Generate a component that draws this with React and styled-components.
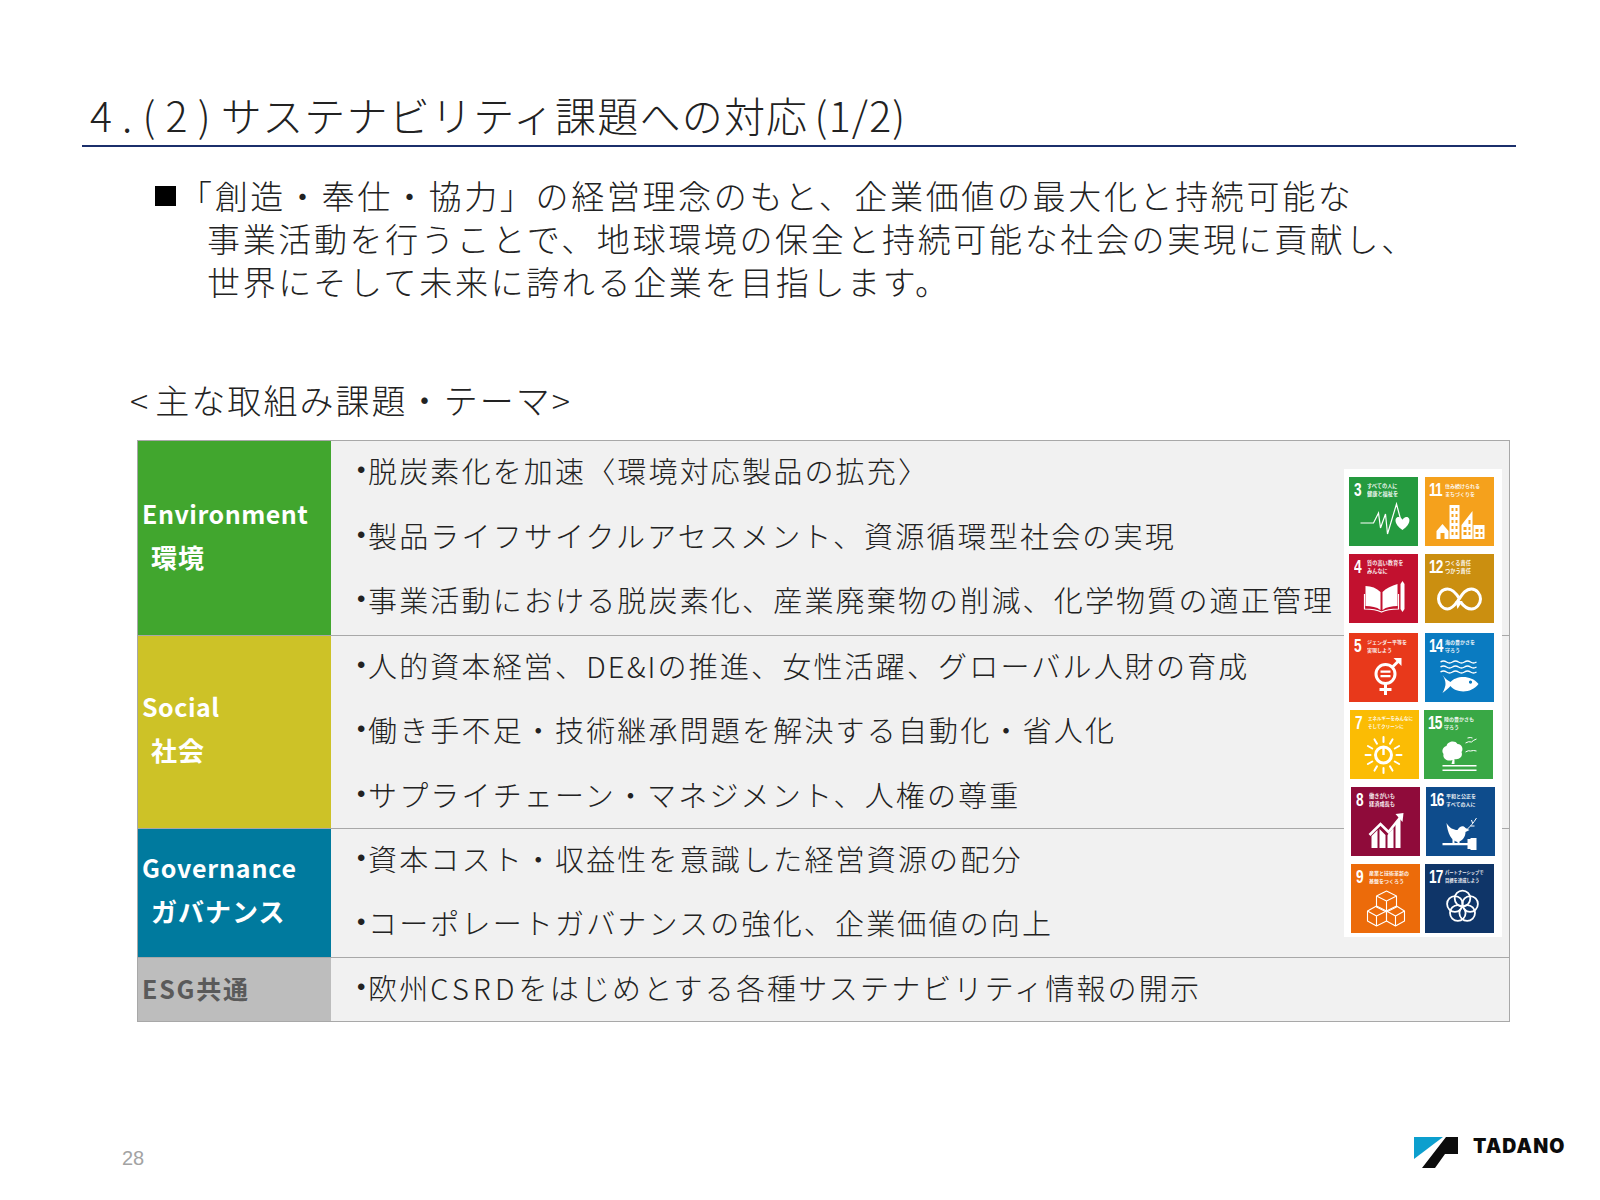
import React from "react";
import styled, { createGlobalStyle } from "styled-components";

const Global = createGlobalStyle`
  html, body { margin: 0; padding: 0; background: #fff; }
  body { font-family: "Noto Sans CJK JP", "Noto Sans", sans-serif; color: #222; }
`;
const Page = styled.div`
  position: relative; width: 1600px; height: 1200px; overflow: hidden; background: #fff;
  padding: 88px 84px 0 82px; box-sizing: border-box;
`;
const Title = styled.h1`
  margin: 0; height: 59px; padding-left: 8px; border-bottom: 2px solid #1b2f6b; box-sizing: border-box;
  font-size: 41px; font-weight: 300; line-height: 52px; letter-spacing: 1.2px; color: #222; white-space: pre;
`;
const TitleNo = styled.span`
  letter-spacing: .55px;
`;
const TitlePage = styled.span`
  margin-left: -4px;
`;
const Lead = styled.div`
  margin: 27px 0 0 73px; font-size: 33px; line-height: 43px; letter-spacing: 2.65px; font-weight: 300; white-space: nowrap;
`;
const LeadLine = styled.div`
  padding-left: ${p => (p.$first ? 0 : 52)}px; display: flex; align-items: center;
`;
const Square = styled.span`
  width: 21px; height: 20px; background: #000; margin-right: 3px; flex: none;
`;
const SubHead = styled.h2`
  margin: 73px 0 0 48px; font-size: 34px; line-height: 48px; font-weight: 300; letter-spacing: 2.05px;
`;
const SubHeadMark = styled.span`
  margin-right: 5px;
`;
const TableWrap = styled.div`
  position: relative; margin: 16px 0 0 55px; width: 1373px;
`;
const Table = styled.div`
  border: 1px solid #a8a8a8; background: #f1f1f1;
`;
const Row = styled.div`
  display: grid; grid-template-columns: 193px 1fr; height: ${p => p.$h}px; box-sizing: border-box;
  & + & { border-top: 1px solid #a8a8a8; }
`;
const Label = styled.div`
  background: ${p => p.$bg}; color: ${p => p.$fg || "#fff"}; display: flex; flex-direction: column; justify-content: center;
  padding: 0 0 ${p => p.$lift}px 4px; font-size: 25px; letter-spacing: ${p => p.$ls}px; font-weight: 700; line-height: 44px; white-space: nowrap;
`;
const LabelSub = styled.span`
  padding-left: 9px; font-size: 26px; letter-spacing: 1px;
`;
const Items = styled.ul`
  margin: -3px 0 0; padding: 0 0 0 26px; list-style: none; font-size: 29px; font-weight: 300; letter-spacing: 2.17px; line-height: 64.5px; color: #222; white-space: nowrap;
`;
const Item = styled.li`
  display: flex;
  &::before { content: "•"; width: 11px; flex: none; letter-spacing: 0; font-family: "Liberation Sans", sans-serif; font-size: 24px; }
`;
const WideLatin = styled.span`
  letter-spacing: 4.2px;
`;
const SdgPanel = styled.div`
  position: absolute; left: 1207px; top: 29px; width: 158px; height: 468px; background: #fff;
  display: grid; grid-template-columns: 76px 76px; grid-template-rows: 77px 79px 77px 77px 77px 68px;
  padding: 8px 0 0 5px; box-sizing: border-box;
`;
const Tile = styled.div`
  width: 69px; height: 68.5px; margin-left: ${p => p.$dx || 0}px; background: ${p => p.$bg}; color: #fff; display: flex; flex-direction: column; overflow: hidden;
`;
const TileHead = styled.div`
  height: 22px; display: flex; align-items: flex-start; gap: 2px; padding: 4px 0 0 ${p => (p.$wide ? 4 : 5)}px; box-sizing: border-box;
`;
const TileNum = styled.span`
  font-family: "Liberation Sans", sans-serif; font-weight: 700; font-size: 18.5px; line-height: 17px; letter-spacing: -1px;
  display: inline-block; transform: scaleX(.74); transform-origin: left top; width: ${p => (p.$wide ? 14 : 11)}px; flex: none;
`;
const TileCaption = styled.span`
  font-size: ${p => p.$size}px; line-height: 7.6px; font-weight: 700; white-space: pre; margin-top: 1px; opacity: .92;
`;
const TileIcon = styled.svg`
  display: block; width: 69px; height: 46px; flex: none;
`;
const PageNo = styled.div`
  position: absolute; left: 122px; top: 1146px; font-family: "Liberation Sans", sans-serif; font-size: 20px; line-height: 24px; color: #a3a3a3;
`;
const Logo = styled.div`
  position: absolute; left: 1414px; top: 1136px; display: flex; align-items: flex-start; gap: 15px;
`;
const LogoMark = styled.svg`
  display: block; margin-top: 1px; flex: none;
`;
const LogoText = styled.span`
  font-family: Inter, "Liberation Sans", sans-serif; font-weight: 900; font-size: 19.5px; line-height: 20px; color: #0c0c0c; letter-spacing: 1.1px;
`;

const VB = "0 22 68 46";
const W = { fill: "none", stroke: "#fff" };

const Icon3 = () => (
  <TileIcon viewBox={VB}>
    <polyline {...W} strokeWidth="1.2" points="11,46 24,46 29,36 31,51 36,37 38,57 47,27 51,42" />
    <path fill="#fff" d="M53 53 C44 47 45 40 49 40 C51 40 53 42 53 43 C53 42 55 40 57 40 C61 40 62 47 53 53Z" />
  </TileIcon>
);
const Icon11 = () => (
  <TileIcon viewBox={VB}>
    <path fill="#fff" d="M11 54 L17 47 L23 54 V62 H19 V56 H15 V62 H11Z" />
    <path fill="#fff" fillRule="evenodd" d="M24 28 H34 V62 H24Z M26 31 V34 H28 V31Z M30 31 V34 H32 V31Z M26 37 V40 H28 V37Z M30 37 V40 H32 V37Z M26 43 V46 H28 V43Z M30 43 V46 H32 V43Z M26 49 V52 H28 V49Z M30 49 V52 H32 V49Z M26 55 V58 H28 V55Z M30 55 V58 H32 V55Z" />
    <path fill="#fff" fillRule="evenodd" d="M36 48 L47 34 V62 H36Z M38 50 V53 H41 V50Z M43 50 V53 H45 V50Z M38 55 V58 H41 V55Z M43 55 V58 H45 V55Z M43 43 V47 H45 V43Z" />
    <path fill="#fff" fillRule="evenodd" d="M48 48 H59 V62 H48Z M50 52 V55 H53 V52Z M55 52 V55 H57 V52Z M50 57 V60 H53 V57Z M55 57 V60 H57 V57Z" />
  </TileIcon>
);
const Icon4 = () => (
  <TileIcon viewBox={VB}>
    <path fill="#fff" d="M16 32 C22 32 27 34 31 38 V56 C27 53 22 52 16 52Z M33 38 C37 34 42 32 48 30 V52 C42 52 37 53 33 56Z" />
    <path fill="none" stroke="#fff" strokeWidth="1.2" d="M15 40 V55 C22 55 28 56 32 58 C36 56 42 55 49 55 V40" />
    <path fill="#fff" d="M51 30 L53 27 L55 30 V55 L53 58 L51 55Z" />
  </TileIcon>
);
const Icon12 = () => (
  <TileIcon viewBox={VB}>
    <path {...W} strokeWidth="3" d="M34 45 C30 38 26 35 22 35 C16 35 13 40 13 45 C13 50 17 55 22 55 C27 55 30 50 33 46 C37 40 40 35 46 35 C51 35 55 40 55 45 C55 50 51 55 46 55 C42 55 38 52 35 48" />
    <path fill="#fff" d="M30 47 L37 47 L32 55Z" />
  </TileIcon>
);
const Icon5 = () => (
  <TileIcon viewBox={VB}>
    <circle {...W} strokeWidth="3" cx="36" cy="41" r="9.5" />
    <path {...W} strokeWidth="3" d="M36 51 V62 M30 56.5 H42 M42 35 L50 27" />
    <path fill="#fff" d="M44 25 H52 V33Z" />
    <path fill="#fff" d="M31 37.5 H41 V39.8 H31Z M31 42 H41 V44.3 H31Z" />
  </TileIcon>
);
const Icon14 = () => (
  <TileIcon viewBox={VB}>
    <path {...W} strokeWidth="1.4" d="M15 29 q3 -2 6 0 t6 0 t6 0 t6 0 t6 0 t6 0 M15 34 q3 -2 6 0 t6 0 t6 0 t6 0 t6 0 t6 0 M15 39 q3 -2 6 0 t6 0 t6 0 t6 0 t6 0 t6 0" />
    <path fill="#fff" fillRule="evenodd" d="M17 42 C20 46 23 48 25 49 C30 43 45 41 53 51 C46 61 30 60 25 53 C23 55 20 58 17 60 C19 56 20 53 20 51 C20 48 19 45 17 42Z M45 47.5 a1.6 1.6 0 1 0 .01 0Z" />
  </TileIcon>
);
const SUN_RAYS = [0, 30, 60, 90, 120, 150, 180, 210, 240, 270, 300, 330];
const Icon7 = () => (
  <TileIcon viewBox={VB}>
    <circle {...W} strokeWidth="3" cx="33" cy="45" r="8" />
    <path {...W} strokeWidth="2.4" d="M33 38 V45" />
    <g {...W} strokeWidth="2" strokeLinecap="round">
      {SUN_RAYS.map(a => <line key={a} x1="33" y1="32" x2="33" y2="27" transform={`rotate(${a} 33 45)`} />)}
    </g>
  </TileIcon>
);
const Icon15 = () => (
  <TileIcon viewBox={VB}>
    <path fill="#fff" d="M28 50 C22 52 18 48 19 44 C16 40 20 36 22 36 C23 31 31 30 33 34 C38 34 39 40 37 42 C39 47 34 50 30 49 V54 H27Z" />
    <path fill="#fff" d="M18 55 H52 V56.6 H18Z M18 59.5 H52 V61.1 H18Z" />
    <path {...W} strokeWidth="1" d="M41 33 q3 -2 6 -1 q2 -2 5 -3 M41 42 q3 -2 5 -1 q3 -1 6 0 M43 28 q3 -1 5 0" />
  </TileIcon>
);
const Icon8 = () => (
  <TileIcon viewBox={VB}>
    <path fill="#fff" d="M20 49 L26 43 V61 H20Z M28 42 L34 48 V61 H28Z M36 48 L42 41 V61 H36Z M44 36 L49 30 V61 H44Z" />
    <path {...W} strokeWidth="2.6" d="M18 48 L29 37 L37 45 L49 30" />
    <path fill="#fff" d="M44 27 L52 26 L51 35Z" />
  </TileIcon>
);
const Icon16 = () => (
  <TileIcon viewBox={VB}>
    <path fill="#fff" d="M20 36 C23 41 27 43 31 43 C33 39 37 38 39 41 L43 43 L39 45 C39 50 36 54 31 55 C25 54 21 46 20 36Z" />
    <path {...W} strokeWidth="1" d="M41 42 C44 39 47 36 50 31 M44 39 L48 39 M46 36 L45 33" />
    <path fill="#fff" d="M16 56 H42 V58.2 H16Z M41 52 H44 V62 H41Z M44 51 H50 V63 H44Z" />
    <path fill="#fff" d="M26 52 h2 v5 h-2Z M31 52 h2 v5 h-2Z" />
  </TileIcon>
);
const Icon9 = () => (
  <TileIcon viewBox={VB}>
    <g {...W} strokeWidth="1.1" strokeLinejoin="round">
      <path d="M35 27 L45 32 V43 L35 48 L25 43 V32Z M25 32 L35 37 L45 32 M35 37 V48" />
      <path d="M25 42 L35 47 V57 L25 62 L16 57 V47Z M16 47 L25 52 L35 47 M25 52 V62" />
      <path d="M45 42 L53 47 V57 L44 62 L35 57 V47Z M35 47 L44 52 L53 47 M44 52 V62" />
    </g>
  </TileIcon>
);
const Icon17 = () => (
  <TileIcon viewBox={VB}>
    <g {...W} strokeWidth="1.8">
      <circle cx="37" cy="34.5" r="7.8" />
      <circle cx="44.6" cy="40" r="7.8" />
      <circle cx="41.7" cy="49" r="7.8" />
      <circle cx="32.3" cy="49" r="7.8" />
      <circle cx="29.4" cy="40" r="7.8" />
    </g>
  </TileIcon>
);

const tiles = [
  { n: "3", c: "すべての人に\n健康と福祉を", s: 5.2, bg: "#259a3f", I: Icon3 },
  { n: "11", c: "住み続けられる\nまちづくりを", s: 5, bg: "#f5a11c", I: Icon11 },
  { n: "4", c: "質の高い教育を\nみんなに", s: 5.2, bg: "#c2112f", I: Icon4 },
  { n: "12", c: "つくる責任\nつかう責任", s: 5.2, bg: "#cb8f10", I: Icon12 },
  { n: "5", c: "ジェンダー平等を\n実現しよう", s: 5, bg: "#e8391b", I: Icon5 },
  { n: "14", c: "海の豊かさを\n守ろう", s: 5, bg: "#0a7bc1", I: Icon14 },
  { n: "7", c: "エネルギーをみんなに\nそしてクリーンに", s: 4.5, bg: "#fbbc04", I: Icon7, dx: 1 },
  { n: "15", c: "陸の豊かさも\n守ろう", s: 5, bg: "#39a845", I: Icon15, dx: -1 },
  { n: "8", c: "働きがいも\n経済成長も", s: 5.2, bg: "#8f0b3a", I: Icon8, dx: 2 },
  { n: "16", c: "平和と公正を\nすべての人に", s: 5, bg: "#0e4c8c", I: Icon16, dx: 1 },
  { n: "9", c: "産業と技術革新の\n基盤をつくろう", s: 5, bg: "#ec6b0a", I: Icon9, dx: 2 },
  { n: "17", c: "パートナーシップで\n目標を達成しよう", s: 4.3, bg: "#0f3568", I: Icon17 },
];

const rows = [
  { h: 193.5, lift: 6, ls: 0.5, bg: "#41a62e", en: "Environment", ja: "環境", items: ["脱炭素化を加速〈環境対応製品の拡充〉", "製品ライフサイクルアセスメント、資源循環型社会の実現", "事業活動における脱炭素化、産業廃棄物の削減、化学物質の適正管理"] },
  { h: 193, lift: 7, ls: 0.5, bg: "#cdc227", en: "Social", ja: "社会", items: ["人的資本経営、DE&Iの推進、女性活躍、グローバル人財の育成", "働き手不足・技術継承問題を解決する自動化・省人化", "サプライチェーン・マネジメント、人権の尊重"] },
  { h: 129, lift: 7, ls: 0.8, bg: "#007a9e", en: "Governance", ja: "ガバナンス", items: ["資本コスト・収益性を意識した経営資源の配分", "コーポレートガバナンスの強化、企業価値の向上"] },
  { h: 64.5, lift: 3, ls: 1.8, bg: "#bdbdbd", fg: "#5a5a5a", en: "ESG共通", items: [<React.Fragment key="esg">欧州<WideLatin>CSRD</WideLatin>をはじめとする各種サステナビリティ情報の開示</React.Fragment>] },
];

export default function App() {
  return (
    <Page>
      <Global />
      <Title><TitleNo>{"4 . ( 2 ) "}</TitleNo>{"サステナビリティ課題への対応 "}<TitlePage>(1/2)</TitlePage></Title>
      <Lead>
        <LeadLine $first><Square />「創造・奉仕・協力」の経営理念のもと、企業価値の最大化と持続可能な</LeadLine>
        <LeadLine>事業活動を行うことで、地球環境の保全と持続可能な社会の実現に貢献し、</LeadLine>
        <LeadLine>世界にそして未来に誇れる企業を目指します。</LeadLine>
      </Lead>
      <SubHead><SubHeadMark>&lt;</SubHeadMark>主な取組み課題・テーマ&gt;</SubHead>
      <TableWrap>
        <Table>
          {rows.map(r => (
            <Row key={r.en} $h={r.h}>
              <Label $bg={r.bg} $fg={r.fg} $lift={r.lift} $ls={r.ls}>
                <span>{r.en}</span>
                {r.ja && <LabelSub>{r.ja}</LabelSub>}
              </Label>
              <Items>
                {r.items.map((t, i) => <Item key={i}>{t}</Item>)}
              </Items>
            </Row>
          ))}
        </Table>
        <SdgPanel>
          {tiles.map(({ n, c, s, bg, I, dx }) => (
            <Tile key={n} $bg={bg} $dx={dx}>
              <TileHead $wide={n.length > 1}>
                <TileNum $wide={n.length > 1}>{n}</TileNum>
                <TileCaption $size={s}>{c}</TileCaption>
              </TileHead>
              <I />
            </Tile>
          ))}
        </SdgPanel>
      </TableWrap>
      <PageNo>28</PageNo>
      <Logo>
        <LogoMark width="44" height="32" viewBox="0 0 44 32">
          <path fill="#0c9fce" d="M0 0 H29 L0 22Z" />
          <path fill="#0c0c0c" d="M32 0 H44 V17 H31 L21 31 H8Z" />
        </LogoMark>
        <LogoText>TADANO</LogoText>
      </Logo>
    </Page>
  );
}
